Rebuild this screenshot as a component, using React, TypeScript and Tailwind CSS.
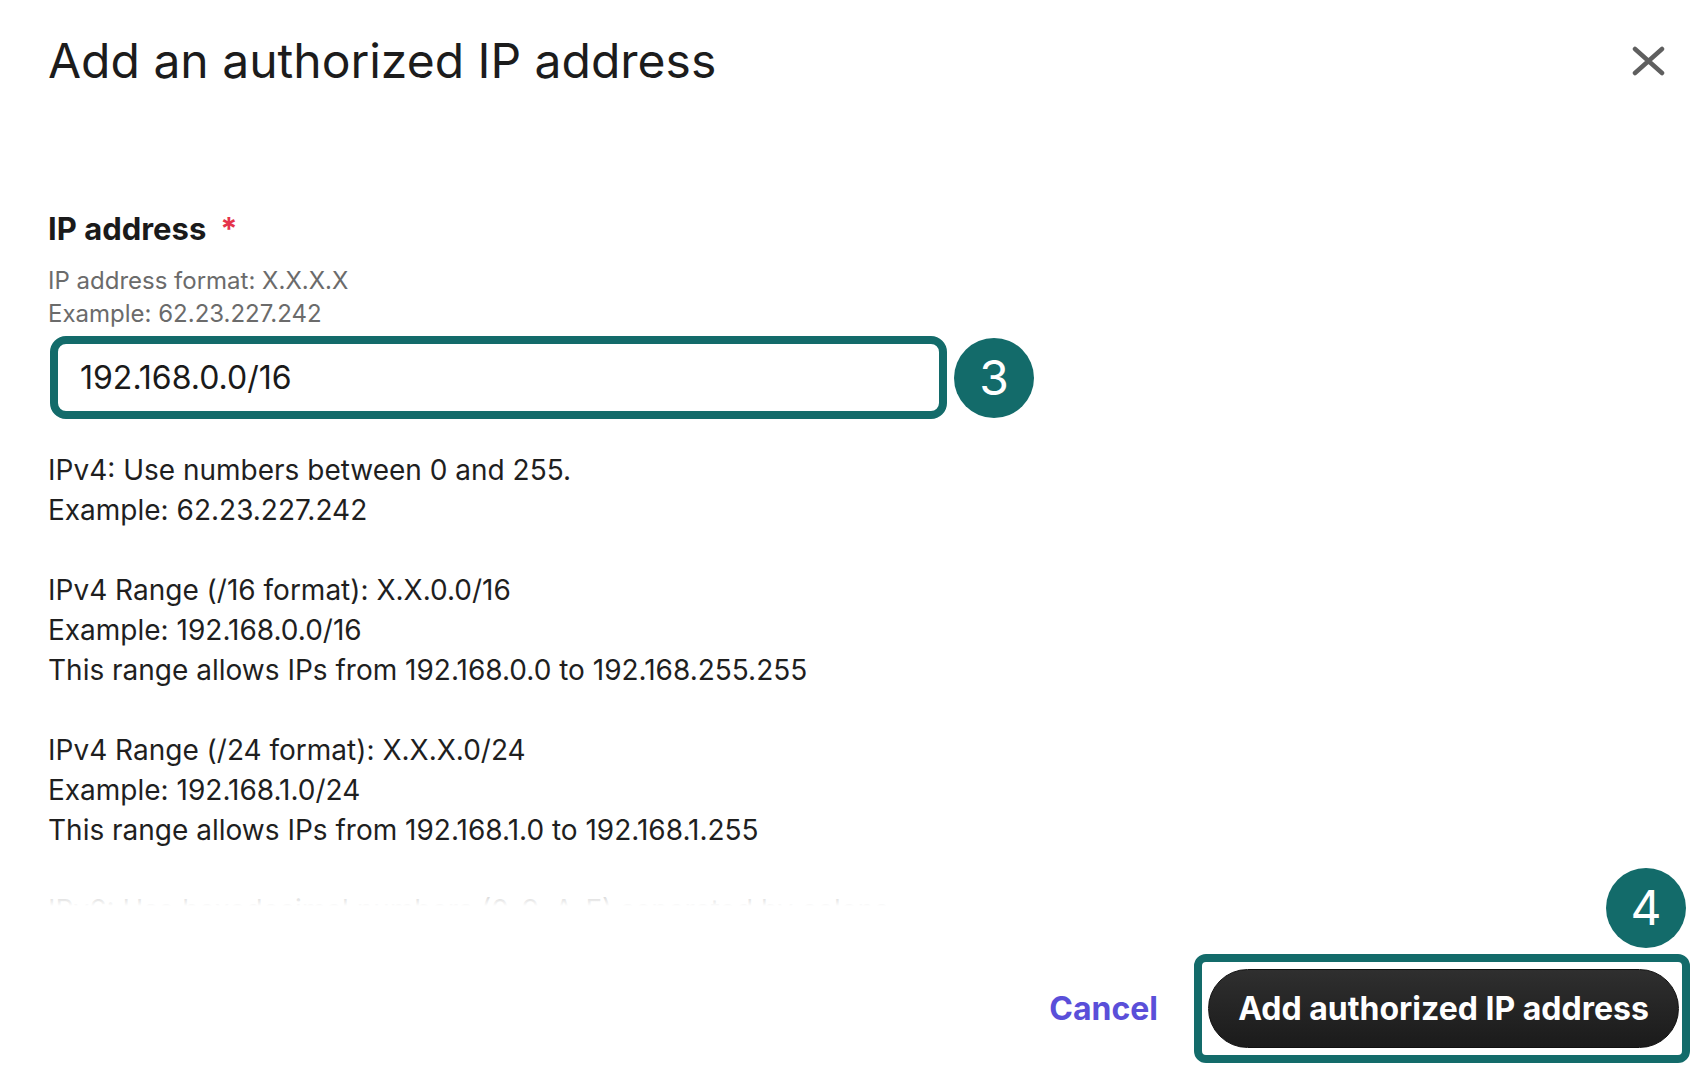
export default function App() {
  const teal = "border-[#136b6a]";
  return (
    <div className="w-[1708px] h-[1090px] bg-white flex flex-col overflow-hidden font-['Inter',sans-serif] text-[#1d1d1d]">
      <header className="flex items-center justify-between pl-[48px] pr-[43px] pt-[31px] h-[91px] shrink-0">
        <h1 className="text-[48px] leading-[60px] font-normal text-[#1c1c1c]">
          Add an authorized IP address
        </h1>
        <button className="w-[33px] h-[30px] flex items-center justify-center">
          <svg width="33" height="30" viewBox="0 0 33 30">
            <path
              d="M3 3 L30 27 M30 3 L3 27"
              stroke="#5f5f5f"
              strokeWidth="4.5"
              strokeLinecap="round"
              fill="none"
            />
          </svg>
        </button>
      </header>

      <div className="relative h-[815px] shrink-0 overflow-hidden">
        <div className="pl-[48px] pt-[118px]">
          <div className="flex items-start text-[31px] leading-[40px] font-bold text-[#1a1a1a]">
            IP address
            <span className="ml-[14px] text-[#e5334b]">*</span>
          </div>
          <div className="mt-[15px] text-[24px] leading-[33px] text-[#6b6b6b]">
            <div>IP address format: X.X.X.X</div>
            <div>Example: 62.23.227.242</div>
          </div>
          <div className="mt-[6px] ml-[2px] flex items-center gap-[7px]">
            <div
              className={`w-[897px] h-[83px] rounded-[16px] border-[8px] ${teal} pl-[22px] flex items-center text-[32px] text-[#1a1a1a]`}
            >
              192.168.0.0/16
            </div>
            <div className="w-[80px] h-[80px] rounded-full bg-[#136b6a] text-white text-[48px] flex items-center justify-center">
              3
            </div>
          </div>
          <div className="mt-[31px] text-[28px] leading-[40px] text-[#1f1f1f]">
            <div>IPv4: Use numbers between 0 and 255.</div>
            <div>Example: 62.23.227.242</div>
            <div className="h-[40px]" />
            <div>IPv4 Range (/16 format): X.X.0.0/16</div>
            <div>Example: 192.168.0.0/16</div>
            <div>This range allows IPs from 192.168.0.0 to 192.168.255.255</div>
            <div className="h-[40px]" />
            <div>IPv4 Range (/24 format): X.X.X.0/24</div>
            <div>Example: 192.168.1.0/24</div>
            <div>This range allows IPs from 192.168.1.0 to 192.168.1.255</div>
            <div className="h-[40px]" />
            <div>IPv6: Use hexadecimal numbers (0-9, A-F) separated by colons.</div>
          </div>
        </div>
        <div className="absolute bottom-0 left-0 right-0 h-[56px] bg-linear-to-b from-white/0 to-white" />
      </div>

      <footer className="flex-1 flex justify-end items-start pt-[48px] pr-[18px]">
        <div className="flex items-center gap-[36px]">
          <button className="text-[32px] font-bold text-[#5a4fd9]">Cancel</button>
          <div
            className={`relative border-[8px] ${teal} rounded-[12px] pt-[7px] pb-[7px] pl-[6px] pr-[3px]`}
          >
            <div className="absolute -top-[94px] -right-[4px] w-[80px] h-[80px] rounded-full bg-[#136b6a] text-white text-[48px] flex items-center justify-center">
              4
            </div>
            <button className="w-[471px] h-[79px] rounded-full bg-linear-to-b from-[#2f2f2f] to-[#1b1b1b] border border-[#111] text-white text-[32px] font-bold">
              Add authorized IP address
            </button>
          </div>
        </div>
      </footer>
    </div>
  );
}
